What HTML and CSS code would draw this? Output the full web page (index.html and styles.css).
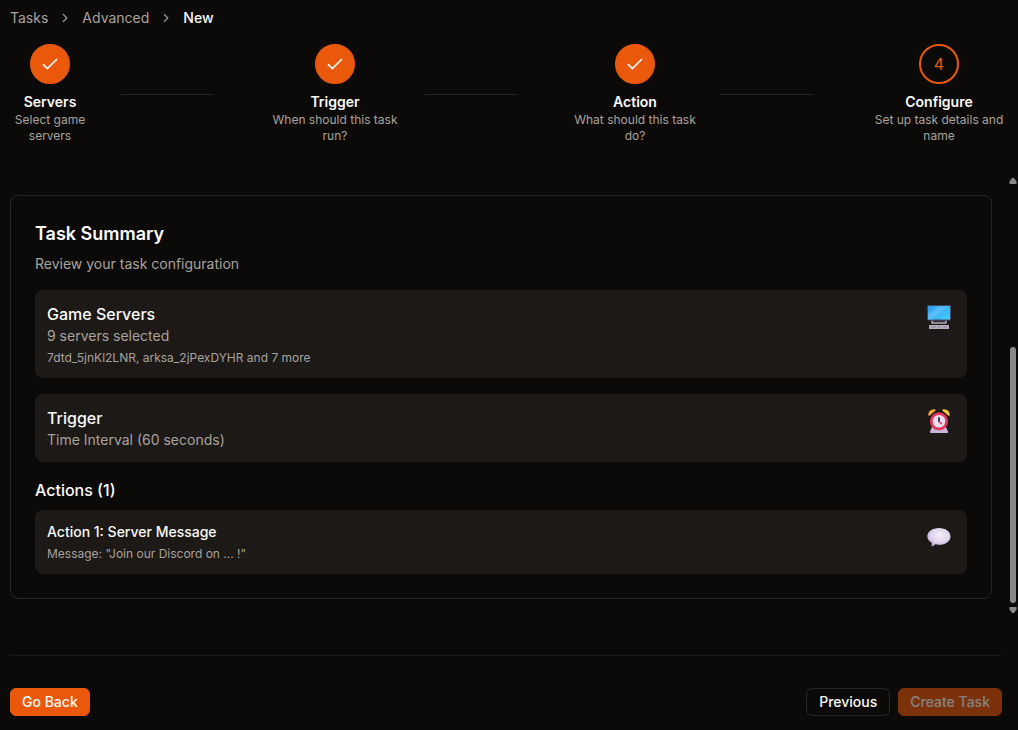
FILE: index.html
```html
<!DOCTYPE html>
<html lang="en">
<head>
<meta charset="utf-8">
<meta name="viewport" content="width=device-width, initial-scale=1">
<title>New Advanced Task</title>
<link rel="stylesheet" href="styles.css">
</head>
<body class="page">
<nav class="crumbs" aria-label="Breadcrumb">
  <a href="#">Tasks</a>
  <svg class="chevron" viewBox="0 0 14 14"><path d="M5 3.2 8.8 7 5 10.8"/></svg>
  <a href="#">Advanced</a>
  <svg class="chevron" viewBox="0 0 14 14"><path d="M5 3.2 8.8 7 5 10.8"/></svg>
  <span class="crumb-current" aria-current="page">New</span>
</nav>

<div class="stepper">
  <div class="step step-1">
    <span class="step-dot step-done"><svg class="check" viewBox="0 0 20 20"><path d="M3 10.2 7.3 14.5 17 5"/></svg></span>
    <span class="step-title">Servers</span>
    <span class="step-text">Select game servers</span>
  </div>
  <span class="connector connector-1"></span>
  <div class="step step-2">
    <span class="step-dot step-done"><svg class="check" viewBox="0 0 20 20"><path d="M3 10.2 7.3 14.5 17 5"/></svg></span>
    <span class="step-title">Trigger</span>
    <span class="step-text">When should this task run?</span>
  </div>
  <span class="connector connector-2"></span>
  <div class="step step-3">
    <span class="step-dot step-done"><svg class="check" viewBox="0 0 20 20"><path d="M3 10.2 7.3 14.5 17 5"/></svg></span>
    <span class="step-title">Action</span>
    <span class="step-text">What should this task do?</span>
  </div>
  <span class="connector connector-3"></span>
  <div class="step step-4">
    <span class="step-dot step-current">4</span>
    <span class="step-title">Configure</span>
    <span class="step-text">Set up task details and name</span>
  </div>
</div>

<div class="scroll-area">
  <main class="card">
    <h1 class="card-title">Task Summary</h1>
    <p class="muted">Review your task configuration</p>

    <section class="row">
      <div>
        <h2 class="heading">Game Servers</h2>
        <p class="muted">9 servers selected</p>
        <p class="detail">7dtd_5jnKl2LNR, arksa_2jPexDYHR and 7 more</p>
      </div>
      <svg class="emoji" viewBox="0 0 24 24">
        <defs><linearGradient id="screen" x1="0" y1="0" x2="1" y2="1"><stop offset="0" stop-color="#2d9df0"/><stop offset="1" stop-color="#45cdfb"/></linearGradient></defs>
        <path d="M4.500 15h15v4h-15z" fill="#5d5767"/>
        <path d="M6 15h12v2.500H6z" fill="#37323d"/>
        <path d="M5 15.500v2.500h14v-2.500" stroke="#c0bac8" stroke-width="1.200" fill="none"/>
        <rect x="0" y="0" width="24" height="15.500" rx=".7" fill="#3e4664"/>
        <rect x="1" y="1" width="22" height="13.500" fill="url(#screen)"/>
        <path d="M1 9 12 1h9L5 14.500H1z" fill="#72c5fa" opacity=".55"/>
        <rect x="2" y="20" width="20" height="4" rx=".5" fill="#b3adbb"/>
        <path d="M4 22h5m2 0h3m2 0h4" stroke="#8b8494" stroke-width="1" fill="none"/>
      </svg>
    </section>

    <section class="row">
      <div>
        <h2 class="heading">Trigger</h2>
        <p class="muted">Time Interval (60 seconds)</p>
      </div>
      <svg class="emoji" viewBox="0 0 24 24">
        <path d="M1.3 6.2C1 2.8 4.2-.5 8.3.5c.6.4.5 1-.1 1.5L2.8 6.6c-.6.4-1.3.3-1.5-.4z" fill="#f0a535"/>
        <path d="M22.7 6.2C23 2.800 19.8-.5 15.7.5c-.6.4-.5 1 .1 1.5l5.4 4.6c.6.4 1.3.3 1.5-.4z" fill="#f7c73c"/>
        <path d="m5 18-2 4.500q-.3 1.500 1 1.500h16q1.300 0 1-1.500L19 18z" fill="#c9b4dc"/>
        <circle cx="12" cy="12.300" r="9" fill="#e9365c"/>
        <circle cx="12" cy="12.300" r="6.300" fill="#e9e0f2"/>
        <path d="M12 8.200V13" stroke="#36274e" stroke-width="1.800" fill="none"/>
        <path d="m12 12.500 2.800 2.700" stroke="#ee365b" stroke-width="1.600" fill="none"/>
      </svg>
    </section>

    <h2 class="heading actions-heading">Actions (1)</h2>
    <section class="row">
      <div>
        <h3 class="subheading">Action 1: Server Message</h3>
        <p class="detail">Message: "Join our Discord on ... !"</p>
      </div>
      <svg class="emoji" viewBox="0 0 24 24">
        <defs><radialGradient id="bubble" cx=".55" cy=".4" r=".65"><stop offset="0" stop-color="#f4effa"/><stop offset=".6" stop-color="#e0d5ee"/><stop offset="1" stop-color="#b3a0d0"/></radialGradient></defs>
        <path d="M12 3C18.500 3 23.500 6.500 23.500 11.500S18.500 19.800 12 19.800c-1.500 0-2.600-.2-3.800-.5-1 1.100-2 1.900-3.300 2-.5 0-.6-.4-.4-.9.400-.8.400-1.800.2-2.600C2 16.300.300 14 .300 11.500.300 6.500 5.500 3 12 3z" fill="url(#bubble)"/>
      </svg>
    </section>
  </main>

  <div class="scrollbar" aria-hidden="true">
    <svg class="arrow" viewBox="0 0 8 6"><path d="M3 0h2l2.500 3.500V6h-7V3.500z"/></svg>
    <span class="track"><span class="thumb"></span></span>
    <svg class="arrow" viewBox="0 0 8 6"><path d="M3 6h2l2.500-3.500V0h-7v2.500z"/></svg>
  </div>
</div>

<footer class="footer">
  <button class="btn btn-primary" type="button">Go Back</button>
  <div class="footer-group">
    <button class="btn btn-outline" type="button">Previous</button>
    <button class="btn btn-primary" type="button" disabled>Create Task</button>
  </div>
</footer>
</body>
</html>
```

FILE: styles.css
```css
* { box-sizing: border-box; }

.page {
  display: flex;
  flex-direction: column;
  min-height: 100vh;
  margin: 0;
  padding: 8px 0 14px 10px;
  background: #0c0a09;
  color: #fafaf9;
  font-family: Inter, "Liberation Sans", sans-serif;
  font-size: 14px;
  line-height: 20px;
}

h1, h2, h3, p { margin: 0; }

.crumbs { display: flex; align-items: center; gap: 10px; color: #a8a29e; }
.crumbs a { color: inherit; text-decoration: none; }
.crumb-current { color: #fafaf9; font-weight: 500; }
.chevron { width: 14px; height: 14px; fill: none; stroke: #a8a29e; stroke-width: 1.2; }

.stepper {
  display: grid;
  grid-template-columns: 80px 31fr 92fr 57fr 130px 25fr 92fr 53fr 130px 20fr 93fr 61fr 130px;
  align-items: center;
  margin-top: 16px;
  padding-right: 14px;
}
.step { display: flex; flex-direction: column; align-items: center; text-align: center; grid-row: 1; }
.step-1 { grid-column: 1; }
.step-2 { grid-column: 5; }
.step-3 { grid-column: 9; }
.step-4 { grid-column: 13; }
.connector { grid-row: 1; height: 1px; background: #292524; }
.connector-1 { grid-column: 3; }
.connector-2 { grid-column: 7; }
.connector-3 { grid-column: 11; }
.step-dot {
  display: flex;
  align-items: center;
  justify-content: center;
  width: 40px;
  height: 40px;
  margin-bottom: 8px;
  border: 2px solid #ea580c;
  border-radius: 50%;
  font-size: 16px;
}
.step-done { background: #ea580c; }
.step-current { color: #ea580c; }
.check { width: 20px; height: 20px; fill: none; stroke: #fafaf9; stroke-width: 1.7; }
.step-title { font-weight: 600; }
.step-text { color: #a8a29e; font-size: 12px; line-height: 16px; }

.scroll-area { display: flex; flex: 1; align-items: stretch; gap: 17px; margin-top: 31px; padding-right: 1px; }
.card {
  flex: 1;
  align-self: flex-start;
  margin-top: 20px;
  padding: 24px;
  border: 1px solid #292524;
  border-radius: 8px;
}
.card-title { margin-bottom: 6px; font-size: 18px; font-weight: 600; line-height: 28px; }
.muted { color: #a8a29e; }
.row {
  display: flex;
  align-items: flex-start;
  justify-content: space-between;
  margin-top: 16px;
  padding: 12px 16px 12px 12px;
  border-radius: 8px;
  background: #1c1917;
}
.heading { font-size: 16px; font-weight: 500; line-height: 24px; }
.subheading { font-size: 14px; font-weight: 500; line-height: 20px; }
.actions-heading { margin-top: 16px; }
.actions-heading + .row { margin-top: 8px; }
.detail { margin-top: 4px; color: #a8a29e; font-size: 12px; line-height: 16px; }
.emoji { flex: none; width: 24px; height: 30px; }

.scrollbar { display: flex; flex-direction: column; width: 8px; padding: 3px 0 2px; }
.arrow { width: 8px; height: 6px; fill: #8b8988; }
.track { display: flex; flex: 1; flex-direction: column; justify-content: flex-end; padding: 0 1px 4px; }
.thumb { height: 61%; border-radius: 3px; background: #8b8988; }

.footer {
  display: flex;
  justify-content: space-between;
  margin: 40px 16px 0 0;
  padding-top: 32px;
  border-top: 1px solid #1c1917;
}
.footer-group { display: flex; gap: 8px; }
.btn {
  height: 28px;
  padding: 0 11px;
  border: 1px solid transparent;
  border-radius: 6px;
  color: #fafaf9;
  font: 500 14px/20px Inter, "Liberation Sans", sans-serif;
}
.btn-primary { border-color: #ea580c; background: #ea580c; }
.btn-outline { padding: 0 12px; border-color: #292524; background: #0c0a09; }
.btn:disabled { opacity: .5; }
```
